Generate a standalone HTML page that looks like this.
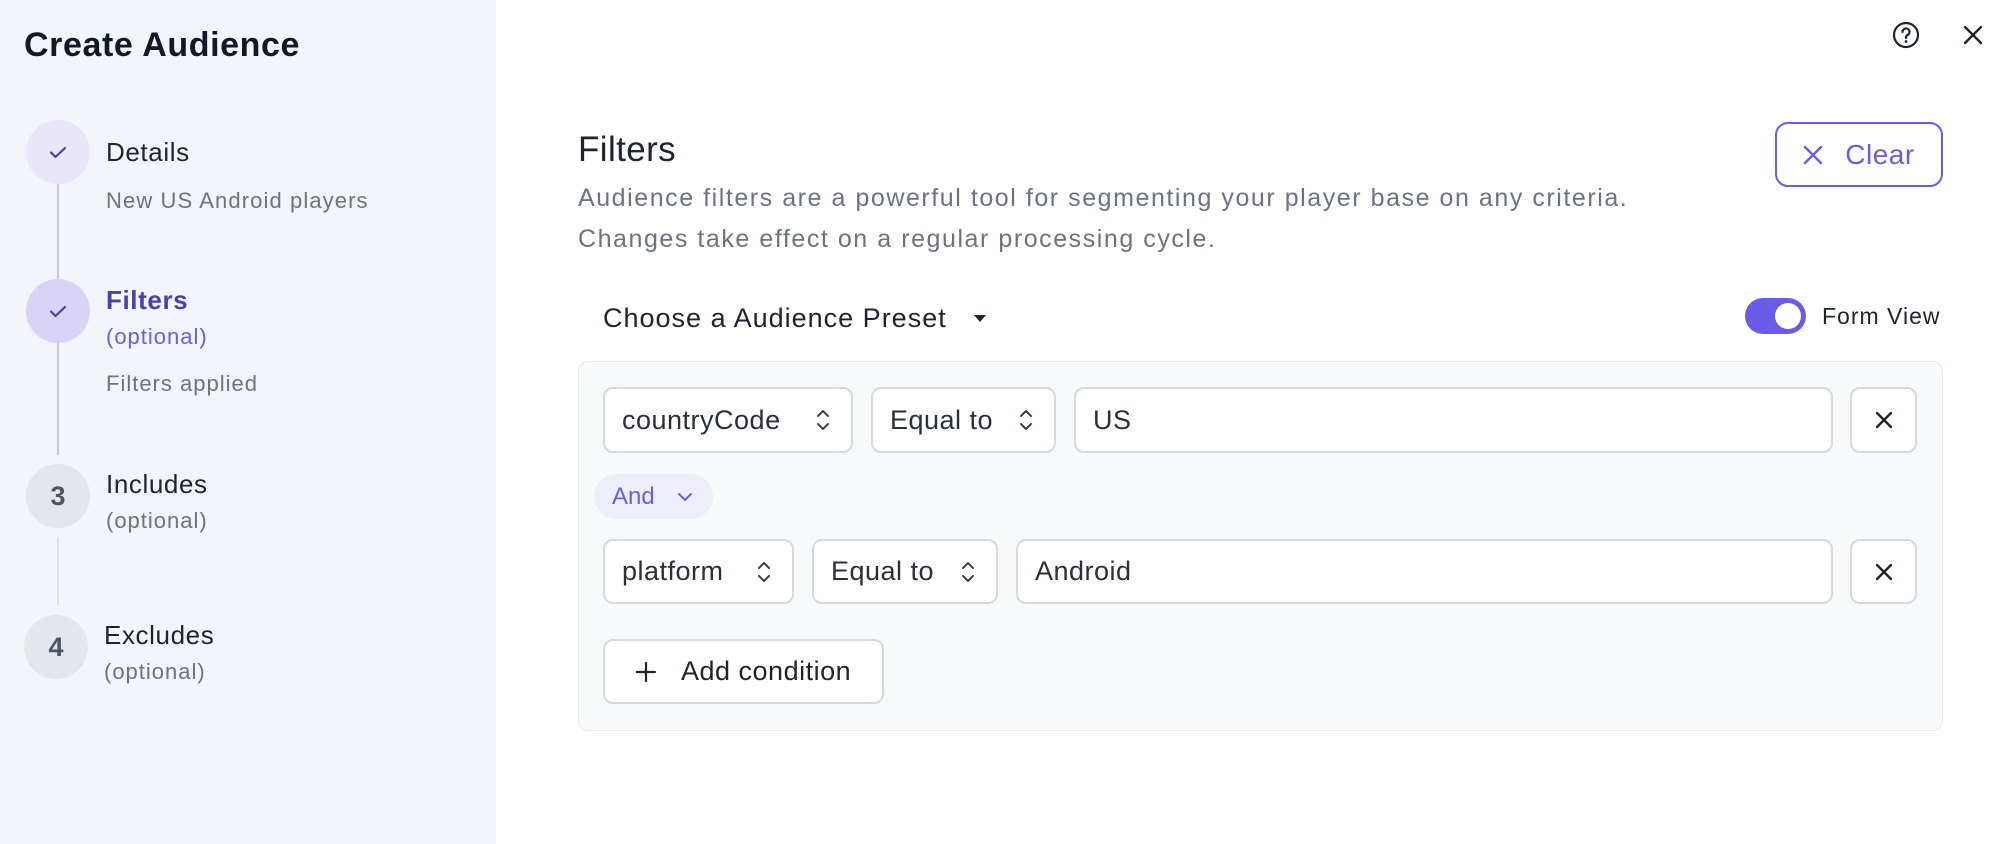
<!DOCTYPE html>
<html><head><meta charset="utf-8"><style>
*{box-sizing:border-box;margin:0;padding:0}
body{width:2008px;height:844px;background:#fff;font-family:"Liberation Sans",sans-serif;position:relative;overflow:hidden;color:#1f2330}
.a{position:absolute}
.side{left:0;top:0;width:496px;height:844px;background:#f2f5f9}
.circ{position:absolute;width:64px;height:64px;border-radius:50%;display:flex;align-items:center;justify-content:center;font-size:27px;font-weight:bold;color:#4b5563}
.t{position:absolute;white-space:nowrap;line-height:1}
.line{position:absolute;left:57px;width:2px}
.box{position:absolute;background:#fff;border:2px solid #d6d9e3;border-radius:10px;font-size:27px;display:flex;align-items:center;padding-left:17px;color:#2a2f3a;letter-spacing:0.5px}
.chev{position:absolute;right:20px;top:50%;margin-top:-13px}
</style></head><body>
<div class="a side"></div>
<div class="t" style="left:24px;top:28px;font-size:34px;font-weight:bold;color:#111827;letter-spacing:0.6px">Create Audience</div>

<div class="line" style="top:183px;height:96px;background:#c9c3f2"></div>
<div class="line" style="top:343px;height:112px;background:#c9c3f2"></div>
<div class="line" style="top:537px;height:69px;background:#dde1e8"></div>

<div class="circ" style="left:26px;top:120px;background:#e9e6fb"><svg width="24" height="24" viewBox="0 0 24 24"><path d="M5 12.5l4.5 4.5L19 8" fill="none" stroke="#4c3fa8" stroke-width="2.2" stroke-linecap="round" stroke-linejoin="round"/></svg></div>
<div class="circ" style="left:26px;top:279px;background:#d8d3f7"><svg width="24" height="24" viewBox="0 0 24 24"><path d="M5 12.5l4.5 4.5L19 8" fill="none" stroke="#4c3fa8" stroke-width="2.2" stroke-linecap="round" stroke-linejoin="round"/></svg></div>
<div class="circ" style="left:26px;top:464px;background:#e3e7ed">3</div>
<div class="circ" style="left:24px;top:615px;background:#e3e7ed">4</div>

<div class="t" style="left:106px;top:139px;font-size:26px;color:#1f2330;letter-spacing:0.6px">Details</div>
<div class="t" style="left:106px;top:190px;font-size:22px;color:#6b7280;letter-spacing:1.1px">New US Android players</div>
<div class="t" style="left:106px;top:287px;font-size:26px;font-weight:bold;color:#4c3fa8;letter-spacing:0.6px">Filters</div>
<div class="t" style="left:106px;top:326px;font-size:22px;color:#6b5ce7;letter-spacing:1px">(optional)</div>
<div class="t" style="left:106px;top:373px;font-size:22px;color:#6b7280;letter-spacing:1px">Filters applied</div>
<div class="t" style="left:106px;top:471px;font-size:26px;color:#1f2330;letter-spacing:0.6px">Includes</div>
<div class="t" style="left:106px;top:510px;font-size:22px;color:#6b7280;letter-spacing:1px">(optional)</div>
<div class="t" style="left:104px;top:622px;font-size:26px;color:#1f2330;letter-spacing:0.6px">Excludes</div>
<div class="t" style="left:104px;top:661px;font-size:22px;color:#6b7280;letter-spacing:1px">(optional)</div>

<svg class="a" style="left:1892px;top:21px" width="28" height="28" viewBox="0 0 28 28"><circle cx="14" cy="14" r="12" fill="none" stroke="#1f2330" stroke-width="2.2"/><path d="M10.5 11a3.5 3.5 0 1 1 4.8 3.2c-.9.4-1.3 1-1.3 2v.8" fill="none" stroke="#1f2330" stroke-width="2.2" stroke-linecap="round"/><circle cx="14" cy="20.5" r="1.4" fill="#1f2330"/></svg>
<svg class="a" style="left:1963px;top:25px" width="20" height="20" viewBox="0 0 20 20"><path d="M2 2l16 16M18 2L2 18" stroke="#1f2330" stroke-width="2.4" stroke-linecap="round"/></svg>

<div class="t" style="left:578px;top:132px;font-size:35px;font-weight:500;color:#1f2330;letter-spacing:0.4px">Filters</div>
<div class="t" style="left:578px;top:186px;font-size:25px;color:#6b7280;letter-spacing:1.55px">Audience filters are a powerful tool for segmenting your player base on any criteria.</div>
<div class="t" style="left:578px;top:227px;font-size:25px;color:#6b7280;letter-spacing:1.55px">Changes take effect on a regular processing cycle.</div>

<div class="a" style="left:1775px;top:122px;width:168px;height:65px;border:2px solid #6b5ce7;border-radius:13px;display:flex;align-items:center;justify-content:center;gap:22px;color:#6b5ce7;font-size:28px;letter-spacing:0.5px"><svg width="20" height="20" viewBox="0 0 20 20"><path d="M2 2l16 16M18 2L2 18" stroke="#6b5ce7" stroke-width="2.4" stroke-linecap="round"/></svg>Clear</div>

<div class="t" style="left:603px;top:305px;font-size:27px;font-weight:500;color:#1f2330;letter-spacing:1px">Choose a Audience Preset</div>
<svg class="a" style="left:972px;top:313px" width="16" height="10" viewBox="0 0 16 10"><path d="M2 2h12L8 9z" fill="#1f2330"/></svg>

<div class="a" style="left:1745px;top:298px;width:61px;height:36px;border-radius:18px;background:#6b5ce7"><div class="a" style="right:5px;top:5px;width:26px;height:26px;border-radius:50%;background:#fff"></div></div>
<div class="t" style="left:1822px;top:305px;font-size:23px;color:#1f2330;letter-spacing:1px">Form View</div>

<div class="a" style="left:578px;top:361px;width:1365px;height:370px;background:#f8f9fb;border:1px solid #e6e9ef;border-radius:10px"></div>

<div class="box" style="left:603px;top:387px;width:250px;height:66px">countryCode<svg class="chev" width="16" height="26" viewBox="0 0 16 26"><path d="M3 9l5-5 5 5M3 17l5 5 5-5" fill="none" stroke="#3b4150" stroke-width="2" stroke-linecap="round" stroke-linejoin="round"/></svg></div>
<div class="box" style="left:871px;top:387px;width:185px;height:66px">Equal to<svg class="chev" width="16" height="26" viewBox="0 0 16 26"><path d="M3 9l5-5 5 5M3 17l5 5 5-5" fill="none" stroke="#3b4150" stroke-width="2" stroke-linecap="round" stroke-linejoin="round"/></svg></div>
<div class="box" style="left:1074px;top:387px;width:759px;height:66px">US</div>
<div class="box" style="left:1850px;top:387px;width:67px;height:66px;padding:0;justify-content:center"><svg width="18" height="18" viewBox="0 0 18 18"><path d="M2 2l14 14M16 2L2 16" stroke="#1f2330" stroke-width="2.4" stroke-linecap="round"/></svg></div>

<div class="a" style="left:594px;top:474px;width:119px;height:45px;border-radius:23px;background:#eeeefb;color:#6b5ce7;font-size:24px;display:flex;align-items:center;padding-left:18px;gap:22px">And<svg width="16" height="10" viewBox="0 0 16 10"><path d="M2 2l6 6 6-6" fill="none" stroke="#6b5ce7" stroke-width="2" stroke-linecap="round"/></svg></div>

<div class="box" style="left:603px;top:539px;width:191px;height:65px">platform<svg class="chev" width="16" height="26" viewBox="0 0 16 26"><path d="M3 9l5-5 5 5M3 17l5 5 5-5" fill="none" stroke="#3b4150" stroke-width="2" stroke-linecap="round" stroke-linejoin="round"/></svg></div>
<div class="box" style="left:812px;top:539px;width:186px;height:65px">Equal to<svg class="chev" width="16" height="26" viewBox="0 0 16 26"><path d="M3 9l5-5 5 5M3 17l5 5 5-5" fill="none" stroke="#3b4150" stroke-width="2" stroke-linecap="round" stroke-linejoin="round"/></svg></div>
<div class="box" style="left:1016px;top:539px;width:817px;height:65px">Android</div>
<div class="box" style="left:1850px;top:539px;width:67px;height:65px;padding:0;justify-content:center"><svg width="18" height="18" viewBox="0 0 18 18"><path d="M2 2l14 14M16 2L2 16" stroke="#1f2330" stroke-width="2.4" stroke-linecap="round"/></svg></div>

<div class="box" style="left:603px;top:639px;width:281px;height:65px;padding-left:30px;gap:24px;color:#1f2330"><svg width="22" height="22" viewBox="0 0 22 22"><path d="M11 2v18M2 11h18" stroke="#1f2330" stroke-width="2.2" stroke-linecap="round"/></svg>Add condition</div>
</body></html>
